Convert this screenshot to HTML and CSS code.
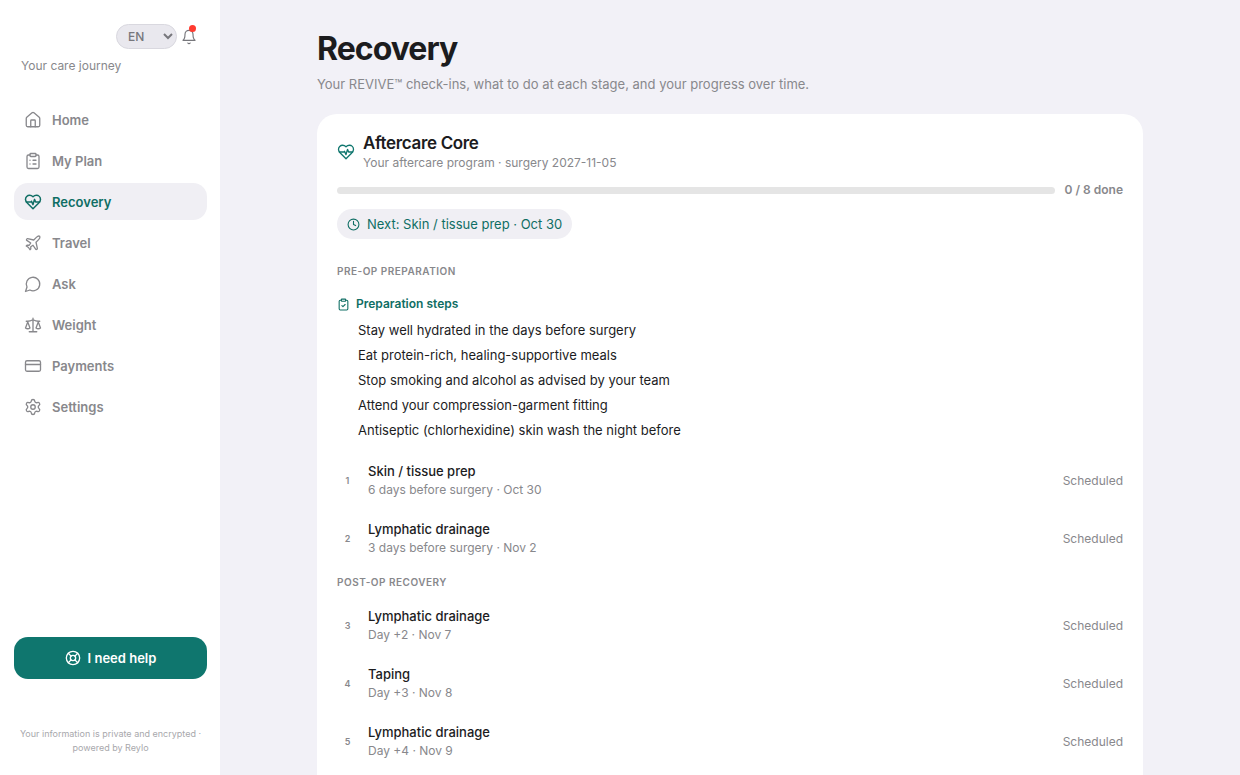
FILE: index.html
```html
<!DOCTYPE html>
<html lang="en">
<head>
    <meta charset="UTF-8">
    <meta name="viewport" content="width=device-width, initial-scale=1.0">
    <title>Recovery</title>
    <link rel="stylesheet" href="styles.css">
</head>
<body>

<div class="app">
    <aside class="sidebar">
        <div class="tools">
            <select class="lang" aria-label="Language">
                <option>EN</option>
            </select>
            <button class="bell" aria-label="Notifications">
                <svg class="icon" viewBox="0 0 24 24"><path d="M10.3 21a1.94 1.94 0 0 0 3.4 0"/><path d="M6 8a6 6 0 0 1 12 0c0 7 3 9 3 9H3s3-2 3-9"/></svg>
                <span class="dot"></span>
            </button>
        </div>
        <p class="tagline">Your care journey</p>

        <nav class="nav">
            <a href="#">
                <svg class="icon" viewBox="0 0 24 24"><path d="M15 21v-8a1 1 0 0 0-1-1h-4a1 1 0 0 0-1 1v8"/><path d="M3 10a2 2 0 0 1 .709-1.528l7-5.999a2 2 0 0 1 2.582 0l7 5.999A2 2 0 0 1 21 10v9a2 2 0 0 1-2 2H5a2 2 0 0 1-2-2z"/></svg>
                Home
            </a>
            <a href="#">
                <svg class="icon" viewBox="0 0 24 24"><rect width="8" height="4" x="8" y="2" rx="1"/><path d="M16 4h2a2 2 0 0 1 2 2v14a2 2 0 0 1-2 2H6a2 2 0 0 1-2-2V6a2 2 0 0 1 2-2h2"/><path d="M12 11h4M12 16h4M8 11h.01M8 16h.01"/></svg>
                My Plan
            </a>
            <a href="#" class="active" aria-current="page">
                <svg class="icon" viewBox="0 0 24 24"><path d="M19 14c1.49-1.46 3-3.21 3-5.5A5.5 5.5 0 0 0 16.5 3c-1.76 0-3 .5-4.5 2-1.5-1.5-2.74-2-4.5-2A5.5 5.5 0 0 0 2 8.5c0 2.3 1.5 4.05 3 5.5l7 7Z"/><path d="M3.22 12H9.5l.5-1 2 4.5 2-7 1.5 3.5h5.27"/></svg>
                Recovery
            </a>
            <a href="#">
                <svg class="icon" viewBox="0 0 24 24"><path d="M17.8 19.2 16 11l3.5-3.5C21 6 21.5 4 21 3c-1-.5-3 0-4.5 1.5L13 8 4.8 6.2c-.5-.1-.9.1-1.1.5l-.3.5c-.2.5-.1 1 .3 1.3L9 12l-2 3H4l-1 1 3 2 2 3 1-1v-3l3-2 3.5 5.3c.3.4.8.5 1.3.3l.5-.2c.4-.3.6-.7.5-1.2z"/></svg>
                Travel
            </a>
            <a href="#">
                <svg class="icon" viewBox="0 0 24 24"><path d="M7.9 20A9 9 0 1 0 4 16.1L2 22Z"/></svg>
                Ask
            </a>
            <a href="#">
                <svg class="icon" viewBox="0 0 24 24"><path d="m16 16 3-8 3 8c-.87.65-1.92 1-3 1s-2.13-.35-3-1Z"/><path d="m2 16 3-8 3 8c-.87.65-1.92 1-3 1s-2.13-.35-3-1Z"/><path d="M7 21h10M12 3v18M3 7h2c2 0 5-1 7-2 2 1 5 2 7 2h2"/></svg>
                Weight
            </a>
            <a href="#">
                <svg class="icon" viewBox="0 0 24 24"><rect width="20" height="14" x="2" y="5" rx="2"/><path d="M2 10h20"/></svg>
                Payments
            </a>
            <a href="#">
                <svg class="icon" viewBox="0 0 24 24"><path d="M9.671 4.136a2.34 2.34 0 0 1 4.659 0 2.34 2.34 0 0 0 3.319 1.915 2.34 2.34 0 0 1 2.33 4.033 2.34 2.34 0 0 0 0 3.831 2.34 2.34 0 0 1-2.33 4.033 2.34 2.34 0 0 0-3.319 1.915 2.34 2.34 0 0 1-4.659 0 2.34 2.34 0 0 0-3.32-1.915 2.34 2.34 0 0 1-2.33-4.033 2.34 2.34 0 0 0 0-3.831A2.34 2.34 0 0 1 6.35 6.051a2.34 2.34 0 0 0 3.319-1.915"/><circle cx="12" cy="12" r="3"/></svg>
                Settings
            </a>
        </nav>

        <button class="help">
            <svg class="icon" viewBox="0 0 24 24"><circle cx="12" cy="12" r="10"/><circle cx="12" cy="12" r="4"/><path d="m4.93 4.93 4.24 4.24M14.83 9.17l4.24-4.24M14.83 14.83l4.24 4.24M9.17 14.83l-4.24 4.24"/></svg>
            I need help
        </button>
        <p class="privacy">Your information is private and encrypted · powered by Reylo</p>
    </aside>

    <main class="main">
        <div class="content">
            <h1>Recovery</h1>
            <p class="lead">Your REVIVE™ check-ins, what to do at each stage, and your progress over time.</p>

            <section class="card">
                <header class="program">
                    <svg class="icon" viewBox="0 0 24 24"><path d="M19 14c1.49-1.46 3-3.21 3-5.5A5.5 5.5 0 0 0 16.5 3c-1.76 0-3 .5-4.5 2-1.5-1.5-2.74-2-4.5-2A5.5 5.5 0 0 0 2 8.5c0 2.3 1.5 4.05 3 5.5l7 7Z"/><path d="M3.22 12H9.5l.5-1 2 4.5 2-7 1.5 3.5h5.27"/></svg>
                    <div>
                        <h2>Aftercare Core</h2>
                        <p class="meta">Your aftercare program · surgery 2027-11-05</p>
                    </div>
                </header>

                <div class="progress">
                    <div class="track" role="progressbar" aria-label="Sessions done" aria-valuemin="0" aria-valuemax="8" aria-valuenow="0"></div>
                    <span>0 / 8 done</span>
                </div>

                <div class="next">
                    <svg class="icon" viewBox="0 0 24 24"><circle cx="12" cy="12" r="10"/><path d="M12 6v6l4 2"/></svg>
                    Next: Skin / tissue prep · Oct 30
                </div>

                <h3 class="phase">Pre-op preparation</h3>
                <h4 class="prep-title">
                    <svg class="icon" viewBox="0 0 24 24"><rect width="8" height="4" x="8" y="2" rx="1"/><path d="M16 4h2a2 2 0 0 1 2 2v14a2 2 0 0 1-2 2H6a2 2 0 0 1-2-2V6a2 2 0 0 1 2-2h2"/><path d="m9 14 2 2 4-4"/></svg>
                    Preparation steps
                </h4>
                <ul class="prep">
                    <li>Stay well hydrated in the days before surgery</li>
                    <li>Eat protein-rich, healing-supportive meals</li>
                    <li>Stop smoking and alcohol as advised by your team</li>
                    <li>Attend your compression-garment fitting</li>
                    <li>Antiseptic (chlorhexidine) skin wash the night before</li>
                </ul>
                <ol class="sessions">
                    <li>
                        <span class="num">1</span>
                        <div><p class="name">Skin / tissue prep</p><p class="meta">6 days before surgery · Oct 30</p></div>
                        <span class="status">Scheduled</span>
                    </li>
                    <li>
                        <span class="num">2</span>
                        <div><p class="name">Lymphatic drainage</p><p class="meta">3 days before surgery · Nov 2</p></div>
                        <span class="status">Scheduled</span>
                    </li>
                </ol>

                <h3 class="phase">Post-op recovery</h3>
                <ol class="sessions">
                    <li>
                        <span class="num">3</span>
                        <div><p class="name">Lymphatic drainage</p><p class="meta">Day +2 · Nov 7</p></div>
                        <span class="status">Scheduled</span>
                    </li>
                    <li>
                        <span class="num">4</span>
                        <div><p class="name">Taping</p><p class="meta">Day +3 · Nov 8</p></div>
                        <span class="status">Scheduled</span>
                    </li>
                    <li>
                        <span class="num">5</span>
                        <div><p class="name">Lymphatic drainage</p><p class="meta">Day +4 · Nov 9</p></div>
                        <span class="status">Scheduled</span>
                    </li>
                </ol>
            </section>
        </div>
    </main>
</div>

</body>
</html>
```
FILE: styles.css
```css
* {
    box-sizing: border-box;
}
body {
    font-family: Inter, "Liberation Sans", sans-serif;
    font-size: 13px;
    color: #1c1c1e;
    background-color: #f2f1f7;
    margin: 0;
}
h1, h2, h3, h4, p, ul, ol {
    margin: 0;
    padding: 0;
}
ul, ol {
    list-style: none;
}
button, select {
    font-family: inherit;
    cursor: pointer;
}
.icon {
    width: 18px;
    height: 18px;
    flex-shrink: 0;
    fill: none;
    stroke: currentColor;
    stroke-width: 1.75;
    stroke-linecap: round;
    stroke-linejoin: round;
}
.app {
    display: flex;
    height: 100vh;
    overflow: hidden;
}

/* Sidebar */
.sidebar {
    display: flex;
    flex-direction: column;
    width: 220px;
    flex-shrink: 0;
    padding: 24px 13px 20px 14px;
    background-color: #fff;
}
.tools {
    display: flex;
    justify-content: flex-end;
    align-items: center;
    gap: 4px;
    padding-right: 10px;
}
.lang {
    width: 61px;
    height: 25px;
    padding: 0 0 0 7px;
    font-size: 12px;
    font-weight: 500;
    color: #77777c;
    background-color: #e9e8ee;
    border: 1px solid #d9d8df;
    border-radius: 13px;
}
.bell {
    position: relative;
    display: flex;
    padding: 0;
    color: #77777c;
    background: none;
    border: 0;
}
.bell .icon {
    width: 16px;
    height: 16px;
}
.dot {
    position: absolute;
    top: -4px;
    right: 1px;
    width: 7px;
    height: 7px;
    border-radius: 50%;
    background-color: #ff3b30;
}
.tagline {
    margin: 8px 0 26px 7px;
    font-size: 12px;
    line-height: 18px;
    color: #88888c;
}
.nav {
    display: flex;
    flex-direction: column;
    gap: 4px;
}
.nav a {
    display: flex;
    align-items: center;
    gap: 10px;
    height: 37px;
    padding: 0 10px;
    font-weight: 600;
    color: #88888c;
    text-decoration: none;
    border-radius: 14px;
}
.nav .active {
    color: #0f6e64;
    background-color: #f0eff4;
}
.nav .active .icon {
    stroke-width: 2;
}
.help {
    display: flex;
    justify-content: center;
    align-items: center;
    gap: 7px;
    height: 42px;
    flex-shrink: 0;
    margin-top: auto;
    font-size: 13px;
    font-weight: 600;
    color: #fff;
    background-color: #0f766e;
    border: 0;
    border-radius: 14px;
}
.help .icon {
    width: 16px;
    height: 16px;
    stroke-width: 2;
}
.privacy {
    margin-top: 48px;
    font-size: 9px;
    line-height: 14px;
    text-align: center;
    color: #a8a8ac;
}

/* Main column */
.main {
    flex: 1;
    padding: 32px 24px;
    overflow: hidden;
}
.content {
    max-width: 826px;
    margin: 0 auto;
}
h1 {
    font-size: 32px;
    line-height: 34px;
    font-weight: 700;
    letter-spacing: -0.03em;
}
.lead {
    margin: 8px 0 20px;
    line-height: 20px;
    color: #88888c;
}
.card {
    padding: 18px 20px 48px;
    background-color: #fff;
    border-radius: 20px;
}
.program {
    display: flex;
    align-items: center;
    gap: 8px;
    color: #0f766e;
}
h2 {
    font-size: 17px;
    line-height: 22px;
    font-weight: 600;
    letter-spacing: -0.02em;
    color: #1c1c1e;
}
.meta {
    font-size: 12px;
    line-height: 18px;
    color: #88888c;
}
.progress {
    display: flex;
    align-items: center;
    gap: 10px;
    margin: 9px 0 10px;
    font-size: 12px;
    line-height: 18px;
    font-weight: 600;
    color: #88888c;
}
.track {
    flex: 1;
    height: 7px;
    border-radius: 4px;
    background-color: #e5e5e5;
}
.next {
    display: flex;
    align-items: center;
    gap: 7px;
    width: fit-content;
    height: 30px;
    margin-bottom: 24px;
    padding: 0 10px;
    color: #0f6e64;
    background-color: #f0eff4;
    border-radius: 15px;
}
.next .icon, .prep-title .icon {
    width: 13px;
    height: 13px;
    stroke-width: 2;
}
.phase {
    margin-top: 7px;
    font-size: 10px;
    line-height: 16px;
    font-weight: 600;
    letter-spacing: 0.05em;
    text-transform: uppercase;
    color: #88888c;
}
.prep-title {
    display: flex;
    align-items: center;
    gap: 6px;
    margin-top: 16px;
    font-size: 12px;
    line-height: 18px;
    font-weight: 600;
    color: #0f6e64;
}
.prep {
    margin: 5px 0 8px 21px;
    line-height: 25px;
}
.sessions {
    margin-top: 6px;
}
.prep + .sessions {
    margin-top: 0;
}
.sessions li {
    display: flex;
    align-items: center;
    gap: 10px;
    height: 58px;
}
.sessions div {
    flex: 1;
}
.num {
    width: 21px;
    font-size: 9px;
    font-weight: 600;
    text-align: center;
    color: #88888c;
}
.name {
    line-height: 19px;
    font-weight: 500;
}
.status {
    font-size: 12px;
    color: #88888c;
}
```
